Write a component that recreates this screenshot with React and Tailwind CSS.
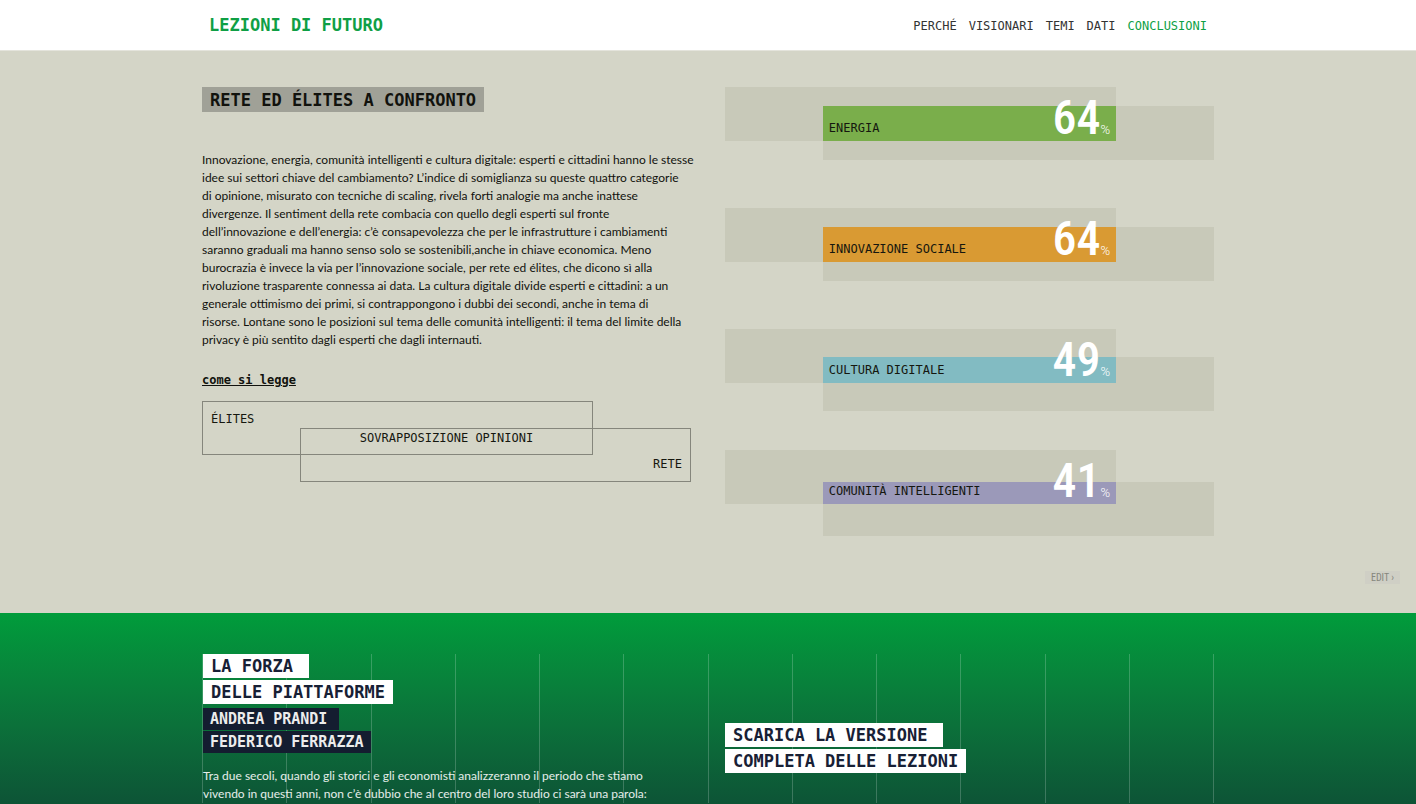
import React from 'react';

const NAV = [
  { label: 'PERCHÉ', href: '#perche' },
  { label: 'VISIONARI', href: '#visionari' },
  { label: 'TEMI', href: '#temi' },
  { label: 'DATI', href: '#dati' },
  { label: 'CONCLUSIONI', href: '#conclusioni', active: true },
];

const INTRO = [
  'Innovazione, energia, comunità intelligenti e cultura digitale: esperti e cittadini hanno le stesse',
  'idee sui settori chiave del cambiamento? L’indice di somiglianza su queste quattro categorie',
  'di opinione, misurato con tecniche di scaling, rivela forti analogie ma anche inattese',
  'divergenze. Il sentiment della rete combacia con quello degli esperti sul fronte',
  'dell’innovazione e dell’energia: c’è consapevolezza che per le infrastrutture i cambiamenti',
  'saranno graduali ma hanno senso solo se sostenibili,anche in chiave economica. Meno',
  'burocrazia è invece la via per l’innovazione sociale, per rete ed élites, che dicono sì alla',
  'rivoluzione trasparente connessa ai data. La cultura digitale divide esperti e cittadini: a un',
  'generale ottimismo dei primi, si contrappongono i dubbi dei secondi, anche in tema di',
  'risorse. Lontane sono le posizioni sul tema delle comunità intelligenti: il tema del limite della',
  'privacy è più sentito dagli esperti che dagli internauti.',
];

const OUTRO = [
  'Tra due secoli, quando gli storici e gli economisti analizzeranno il periodo che stiamo',
  'vivendo in questi anni, non c’è dubbio che al centro del loro studio ci sarà una parola:',
];

const BARS = [
  { label: 'ENERGIA', value: 64, color: 'bg-[#7aae4b]' },
  { label: 'INNOVAZIONE SOCIALE', value: 64, color: 'bg-[#d99a33]' },
  { label: 'CULTURA DIGITALE', value: 49, color: 'bg-[#82bbc2]' },
  { label: 'COMUNITÀ INTELLIGENTI', value: 41, color: 'bg-[#9b99b9]' },
];

const BOX_HEIGHT = 54;

function Lines({ lines }) {
  return lines.map((line, i) => (
    <React.Fragment key={line}>
      {i > 0 && <br />}
      {line}
    </React.Fragment>
  ));
}

// Two boxes that share a strip as tall as the value
function OverlapBar({ label, value, color }) {
  const shared = Math.round((BOX_HEIGHT * value) / 100);
  const rest = BOX_HEIGHT - shared;

  return (
    <li className="h-[121px]">
      <div
        className="grid grid-cols-5"
        style={{ gridTemplateRows: `${rest}px ${shared}px ${rest}px` }}
      >
        <div className="col-start-1 col-span-4 row-start-1 row-span-2 bg-[#c8c9b9]" />
        <div className="col-start-2 col-span-4 row-start-2 row-span-2 bg-[#c8c9b9]" />
        <div className={`col-start-2 col-span-3 row-start-2 ${color}`} />
        <div className="col-start-2 col-span-3 row-start-1 row-span-2 flex items-end justify-between px-[6px]">
          <span className="pb-[5px] font-['DejaVu_Sans_Mono',monospace] text-[12px] leading-[16px] text-[#15170f]">
            {label}
          </span>
          <span className="flex items-baseline text-white">
            <span className="font-['Roboto_Condensed',sans-serif] text-[48px] leading-[46px] font-medium">
              {value}
            </span>
            <span className="font-['Roboto',sans-serif] text-[13px] leading-[16px] font-light">%</span>
          </span>
        </div>
      </div>
    </li>
  );
}

function Legend() {
  return (
    <div className="grid grid-cols-5 grid-rows-[27px_27px_27px] font-['DejaVu_Sans_Mono',monospace] text-[12px] leading-[16px] text-[#15170f]">
      <div className="col-start-1 col-span-4 row-start-1 row-span-2 border border-[#85867c] px-2 pt-[9px]">
        ÉLITES
      </div>
      <div className="col-start-2 col-span-4 row-start-2 row-span-2 flex items-end justify-end border border-[#85867c] px-2 pb-[9px]">
        RETE
      </div>
      <div className="col-start-2 col-span-3 row-start-2 pt-[2px] text-center">
        SOVRAPPOSIZIONE OPINIONI
      </div>
    </div>
  );
}

export default function App() {
  return (
    <div className="flex min-h-screen flex-col bg-[#d4d5c7] font-['Lato',sans-serif]">
      <header className="border-b border-[#e4e4dc] bg-white">
        <div className="mx-auto flex h-[50px] max-w-[1012px] items-center justify-between px-[7px] pt-[2px] font-['DejaVu_Sans_Mono',monospace]">
          <a href="#top" className="text-[17px] font-bold text-[#0f9f45]">LEZIONI DI FUTURO</a>
          <nav className="flex gap-3 text-[12px]">
            {NAV.map((item) => (
              <a
                key={item.label}
                href={item.href}
                className={item.active ? 'text-[#0f9f45]' : 'text-[#333333]'}
              >
                {item.label}
              </a>
            ))}
          </nav>
        </div>
      </header>

      <section className="pt-9">
        <div className="mx-auto grid max-w-[1012px] grid-cols-2 gap-[34px]">
          <div className="flex flex-col items-start">
            <h2 className="bg-[#a0a197] px-2 pt-px font-['DejaVu_Sans_Mono',monospace] text-[17px] leading-[24px] font-bold text-[#11120d]">
              RETE ED ÉLITES A CONFRONTO
            </h2>
            <p className="mt-[39px] text-[12px] leading-[18px] whitespace-nowrap text-[#11120d]">
              <Lines lines={INTRO} />
            </p>
            <h3 className="mt-[22px] mb-[12px] font-['DejaVu_Sans_Mono',monospace] text-[12px] leading-[18px] font-bold text-[#11120d] underline">
              come si legge
            </h3>
            <div className="w-full">
              <Legend />
            </div>
          </div>
          <ul>
            {BARS.map((bar) => (
              <OverlapBar key={bar.label} {...bar} />
            ))}
          </ul>
        </div>
        <div className="flex justify-end pr-4 pb-[29px]">
          <a
            href="#edit"
            className="bg-[#cfcfc5] px-[6px] font-['Roboto_Condensed',sans-serif] text-[10px] leading-[13px] text-[#85867c]"
          >
            EDIT ›
          </a>
        </div>
      </section>

      <section className="flex-1 bg-linear-to-b from-[#009c3b] to-[#0d5436] pt-[41px]">
        <div className="relative mx-auto h-full max-w-[1012px]">
          <div className="absolute inset-0 grid grid-cols-12 border-r border-white/20">
            {Array.from({ length: 12 }, (_, i) => (
              <div key={i} className="border-l border-white/20" />
            ))}
          </div>
          <div className="relative grid grid-cols-2 gap-[34px]">
            <div className="flex flex-col items-start pl-px font-['DejaVu_Sans_Mono',monospace] font-bold">
              <h2 className="flex flex-col items-start gap-[2px] text-[17px] leading-[24px] text-[#172035]">
                <span className="bg-white pr-4 pl-2">LA FORZA</span>
                <span className="bg-white px-2">DELLE PIATTAFORME</span>
              </h2>
              <h3 className="mt-1 flex flex-col items-start gap-px text-[15px] leading-[22px] text-[#ececec]">
                <span className="bg-[#141d30] pr-3 pl-[7px]">ANDREA PRANDI</span>
                <span className="bg-[#141d30] px-[7px]">FEDERICO FERRAZZA</span>
              </h3>
              <p className="mt-[14px] font-['Lato',sans-serif] text-[12px] leading-[18px] font-normal whitespace-nowrap text-white/90">
                <Lines lines={OUTRO} />
              </p>
            </div>
            <a
              href="#download"
              className="mt-[69px] flex flex-col items-start gap-[2px] self-start font-['DejaVu_Sans_Mono',monospace] text-[17px] leading-[24px] font-bold text-[#172035]"
            >
              <span className="bg-white pr-4 pl-2">SCARICA LA VERSIONE</span>
              <span className="bg-white px-2">COMPLETA DELLE LEZIONI</span>
            </a>
          </div>
        </div>
      </section>
    </div>
  );
}
